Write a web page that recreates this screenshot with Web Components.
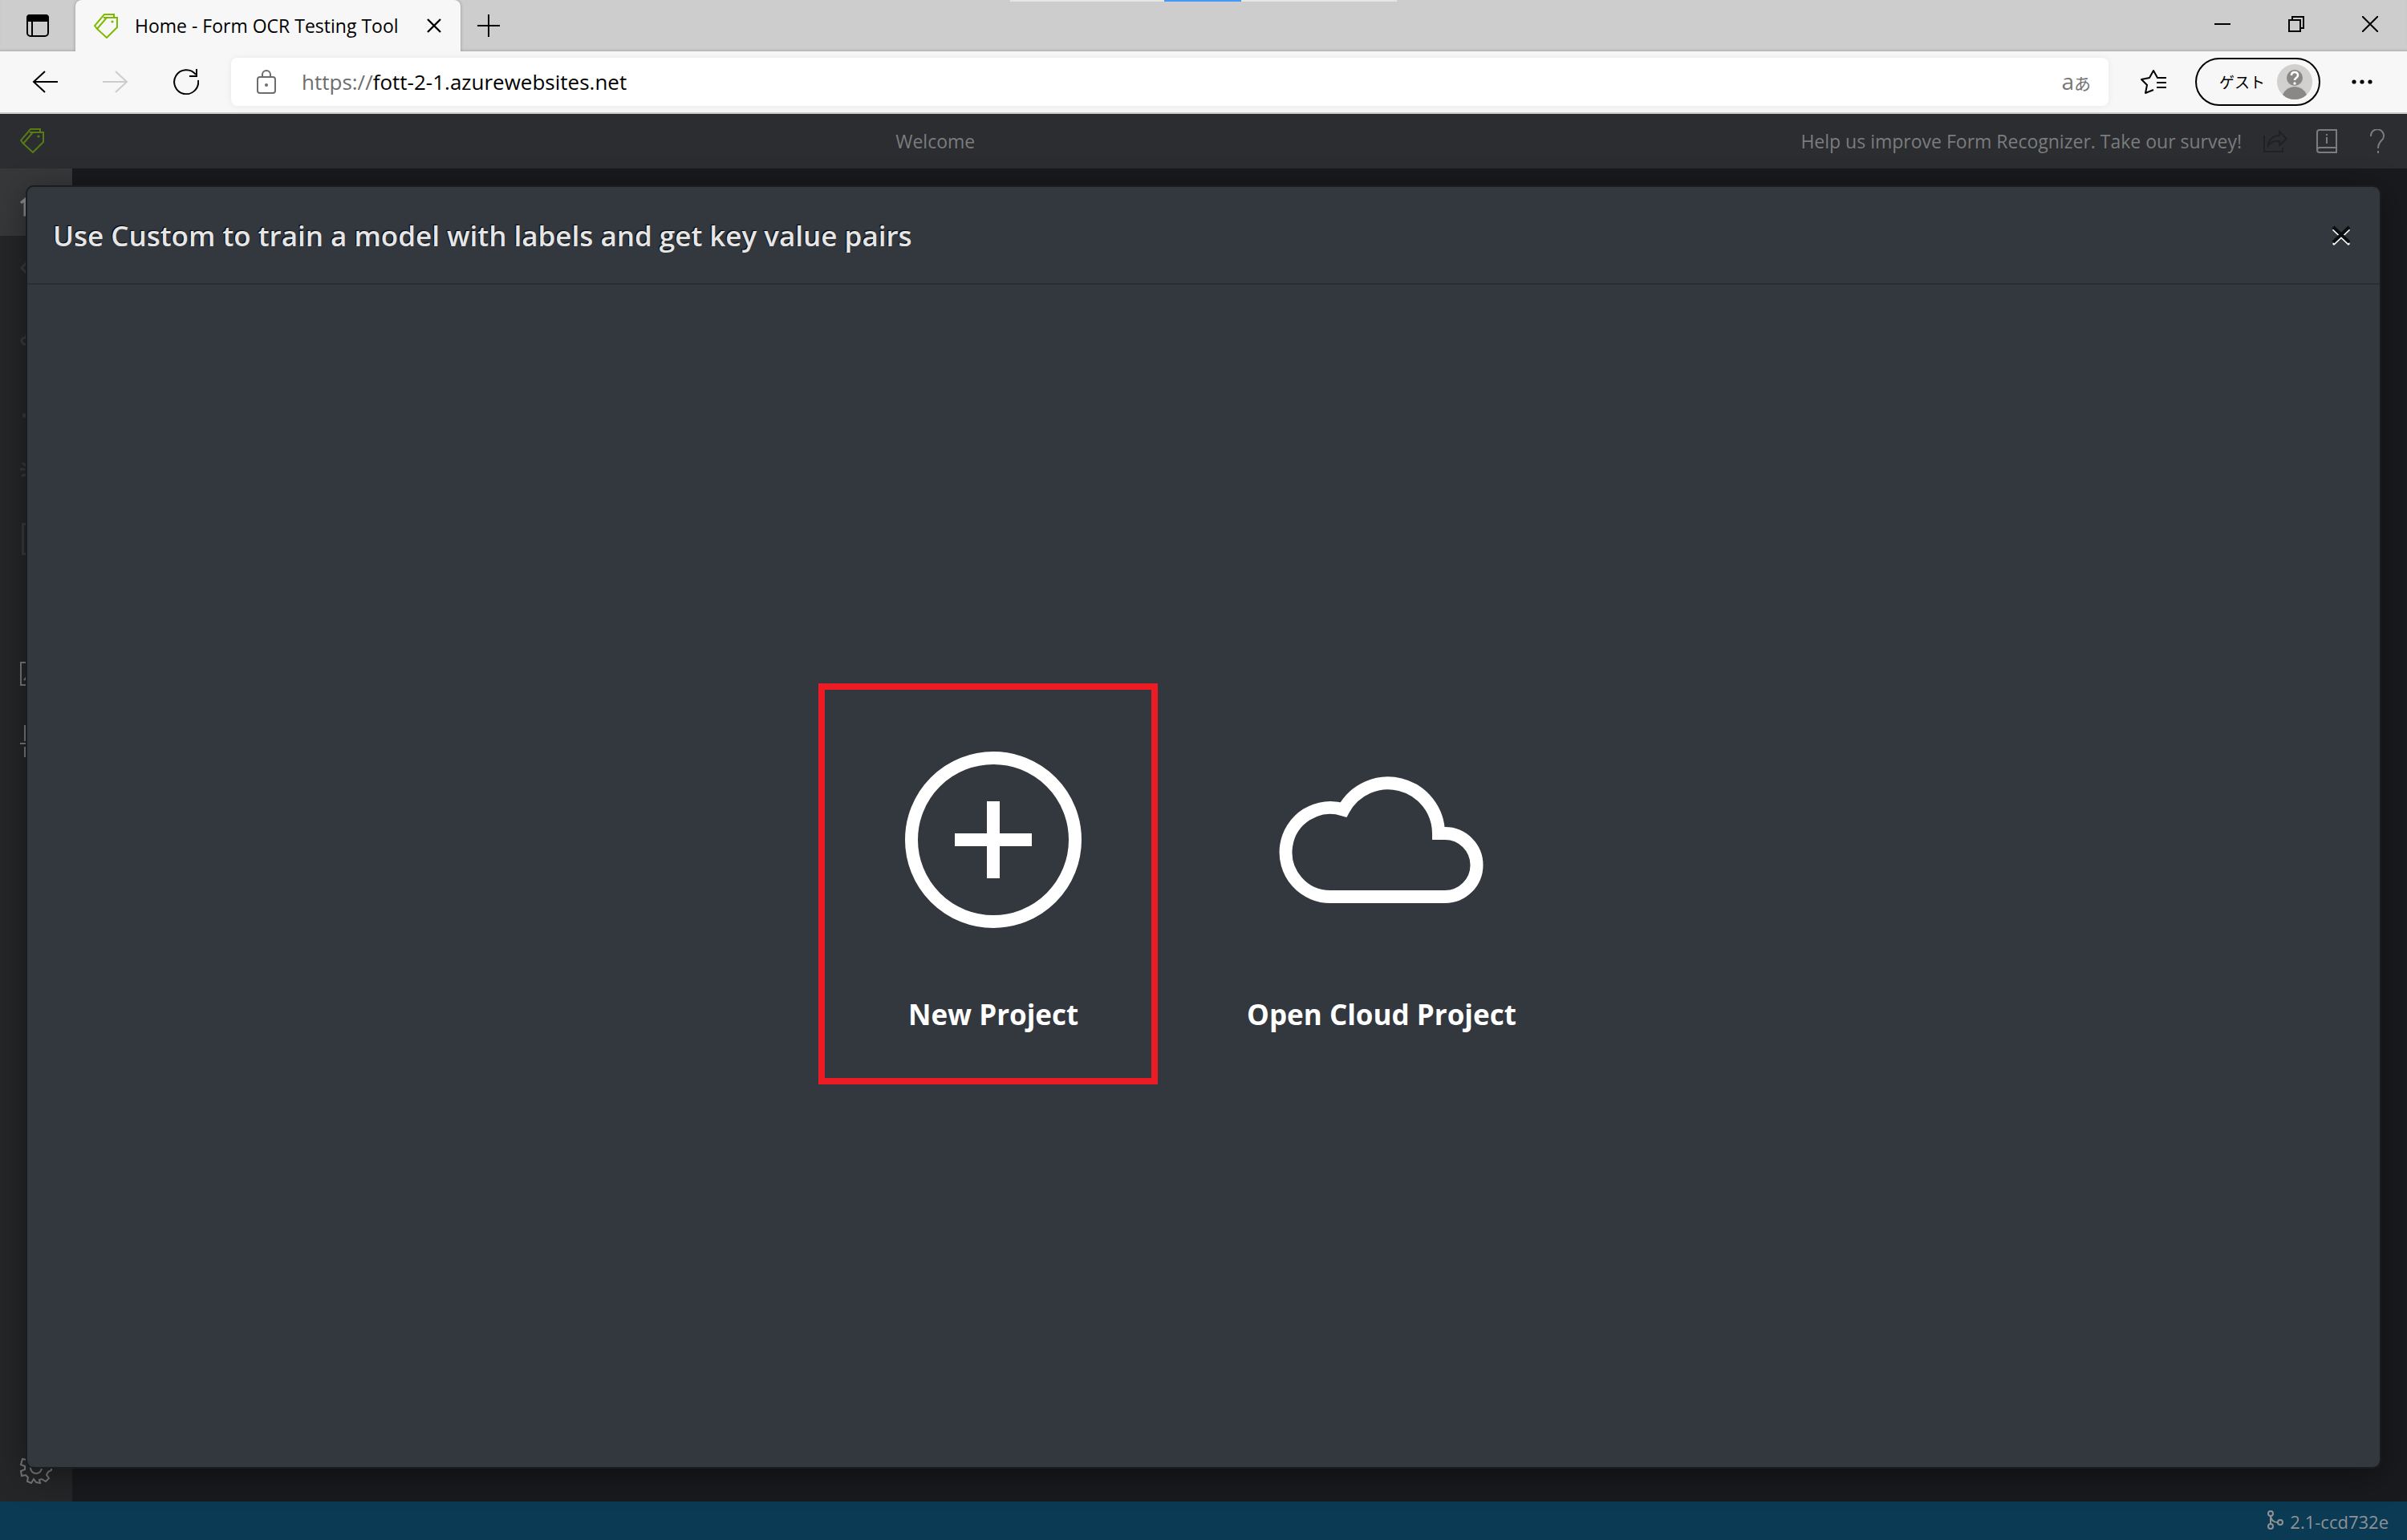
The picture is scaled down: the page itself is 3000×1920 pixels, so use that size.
<!DOCTYPE html>
<html lang="ja">
<head>
<meta charset="utf-8">
<title>Home - Form OCR Testing Tool</title>
<style>
  html, body { margin: 0; height: 100%; }
  body { font-family: "Open Sans", "Noto Sans", "Noto Sans CJK JP", sans-serif; }
</style>
</head>
<body>
<browser-window></browser-window>
<script>
const base = `<style>
  * { box-sizing: border-box; }
  button { font: inherit; color: inherit; background: none; border: 0; padding: 0; margin: 0; display: flex; align-items: center; justify-content: center; cursor: pointer; }
  a { color: inherit; text-decoration: none; }
  svg { display: block; fill: none; stroke: currentColor; stroke-width: 2; flex: none; }
  svg.solid { stroke: none; fill: currentColor; }
</style>`;

function define(name, html) {
  const template = document.createElement("template");
  template.innerHTML = base + html;
  customElements.define(name, class extends HTMLElement {
    constructor() {
      super();
      this.attachShadow({ mode: "open" }).append(template.content.cloneNode(true));
    }
  });
}

define("tag-logo", `
<style>:host { display: block; color: #7fba00; }</style>
<svg width="30" height="32" viewBox="0 0 30 32" aria-hidden="true">
  <path d="M12 6H29V18L16 31L4 20L16 6"/>
  <path d="M4 20L1 16L13 2H25V6"/>
  <circle cx="23" cy="11" r="1.6" fill="currentColor" stroke="none"/>
</svg>`);

define("tab-strip", `
<style>
  :host { display: block; background: #cdcdcd; box-shadow: inset 0 -3px 3px -2px #aaa; color: #000; }
  .bar { display: flex; height: 64px; align-items: stretch; }
  .tabs-menu { width: 94px; }
  .tab { display: flex; align-items: center; width: 480px; padding: 0 16px 0 23px; gap: 21px; background: #f7f7f7; border-radius: 8px 8px 0 0; box-shadow: 0 0 4px #0004; clip-path: inset(0 -4px 0 -4px); font-size: 23px; }
  .tab span { flex: 1; white-space: nowrap; line-height: 32px; }
  .tab button { width: 34px; height: 34px; }
  .new { width: 70px; }
  .window { margin-left: auto; display: flex; }
  .window button { width: 92px; height: 60px; }
  .snap { position: absolute; top: 0; left: 50%; width: 482px; height: 2px; margin-left: -241px; background: linear-gradient(90deg, #e6e6e6 192px, #429af8 192px 288px, #e6e6e6 288px); }
</style>
<div class="snap"></div>
<div class="bar">
  <button class="tabs-menu" aria-label="Tab actions"><svg width="28" height="28" viewBox="0 0 28 28"><rect x="1" y="1" width="26" height="26" rx="4"/><path d="M1 8V4Q1 1 4 1H24Q27 1 27 4V8Z" fill="currentColor"/><path d="M7 8V27"/></svg></button>
  <div class="tab"><tag-logo></tag-logo><span>Home - Form OCR Testing Tool</span>
    <button aria-label="Close tab"><svg width="18" height="18" viewBox="0 0 18 18"><path d="M1 1L17 17M17 1L1 17" stroke-width="2.4"/></svg></button></div>
  <button class="new" aria-label="New tab"><svg width="28" height="28" viewBox="0 0 28 28"><path d="M14 0V28M0 14H28"/></svg></button>
  <div class="window">
    <button aria-label="Minimize"><svg width="20" height="20" viewBox="0 0 20 20"><path d="M0 10H20"/></svg></button>
    <button aria-label="Restore"><svg width="20" height="20" viewBox="0 0 20 20"><path d="M1 5H15V19H1ZM5 5V1H19V15H15"/></svg></button>
    <button aria-label="Close"><svg width="20" height="20" viewBox="0 0 20 20"><path d="M0 0L20 20M20 0L0 20"/></svg></button>
  </div>
</div>`);

define("browser-toolbar", `
<style>
  :host { display: block; background: #f7f7f7; border-bottom: 2px solid #ccc; color: #000; }
  .bar { display: flex; height: 76px; align-items: center; gap: 16px; padding: 0 20px; }
  .bar > button { width: 72px; height: 60px; }
  .bar > .off { color: #ccc; }
  .address { flex: 1; display: flex; align-items: center; height: 60px; margin: 0 4px; padding: 0 22px 0 32px; background: #fff; border-radius: 8px; box-shadow: 0 0 10px #0001; font-size: 26px; line-height: 36px; color: #6d6d6d; }
  .address label { display: flex; align-items: center; gap: 32px; }
  input { flex: 1; min-width: 0; border: 0; padding: 0; background: none; font: inherit; color: #000; outline: 0; }
  .lang { align-items: baseline; color: #767676; font-size: 21px; }
  .lang b { font-weight: 400; font-size: 28px; }
  .bar > .guest { width: 156px; border: 2px solid #000; border-radius: 30px; padding: 0 8px 0 28px; justify-content: space-between; font: 19px/30px "Noto Sans CJK JP", sans-serif; }
</style>
<div class="bar">
  <button aria-label="Back"><svg width="32" height="28" viewBox="0 0 32 28"><path d="M32 14H2M16 1L2 14L16 27"/></svg></button>
  <button class="off" aria-label="Forward" disabled><svg width="32" height="28" viewBox="0 0 32 28"><path d="M0 14H30M16 1L30 14L16 27"/></svg></button>
  <button aria-label="Refresh"><svg width="32" height="32" viewBox="0 0 32 32"><path d="M28 7A15 15 0 1 0 31 14"/><path d="M29 0V9H20"/></svg></button>
  <div class="address">
    <label for="url"><svg width="24" height="30" viewBox="0 0 24 30"><rect x="1" y="9" width="22" height="20" rx="3"/><path d="M7 9V6A5 5 0 0 1 17 6V9"/><circle cx="12" cy="19" r="2" fill="currentColor" stroke="none"/></svg><span>https://</span></label>
    <input id="url" value="fott-2-1.azurewebsites.net">
    <button class="lang" aria-label="Translate"><b>a</b>あ</button>
  </div>
  <button aria-label="Favorites"><svg width="32" height="30" viewBox="0 0 32 30" stroke-linejoin="round"><path d="M32 10H21L16 1L11 10L1 12L8 19L6 29L16 25"/><path d="M20 16H32M20 22H32"/></svg></button>
  <button class="guest">ゲスト<svg class="solid" width="44" height="44" viewBox="0 0 44 44"><circle cx="22" cy="22" r="22" fill="#d2d0ce"/><circle cx="22" cy="17" r="10" fill="#8a8886"/><path d="M7 38Q12 28 22 28Q32 28 37 38Q31 44 22 44Q13 44 7 38Z" fill="#8a8886"/><path d="M18 14Q18 10 22 10Q26 10 26 14C26 17 22 17 22 20" fill="none" stroke="#fff" stroke-width="2.6"/><circle cx="22" cy="24" r="1.7" fill="#fff"/></svg></button>
  <button aria-label="More"><svg class="solid" width="26" height="6" viewBox="0 0 26 6"><circle cx="3" cy="3" r="2.6"/><circle cx="13" cy="3" r="2.6"/><circle cx="23" cy="3" r="2.6"/></svg></button>
</div>`);

define("app-header", `
<style>
  :host { display: flex; align-items: center; height: 68px; padding: 0 4px 0 25px; background: #2b2d30; color: #7b7c7e; font-size: 23px; line-height: 32px; }
  tag-logo { opacity: .55; margin-bottom: 2px; }
  .title { flex: 1; text-align: center; padding-left: 32px; }
  a { margin-right: 10px; }
  button { width: 64px; height: 66px; }
  .share { color: #1f2124; }
</style>
<tag-logo></tag-logo>
<span class="title">Welcome</span>
<a href="#survey">Help us improve Form Recognizer. Take our survey!</a>
<button class="share" aria-label="Share" disabled><svg width="30" height="28" viewBox="0 0 30 28"><path d="M1 7V27H24V22"/><path d="M6 20C6 12 12 7 20 7V2L29 11L20 19V14C14 13 9 15 6 20Z"/></svg></button>
<button aria-label="Documentation"><svg width="26" height="30" viewBox="0 0 26 30"><path d="M25 23H4Q1 23 1 26Q1 29 4 29H25V1H4Q1 1 1 4V26M13 10V18M13 6V8"/></svg></button>
<button aria-label="Help"><svg width="20" height="30" viewBox="0 0 20 30"><path d="M1 9A8 8 0 1 1 16 12C13 16 10 17 10 24M10 27V30"/></svg></button>`);

define("side-nav", `
<style>
  :host { display: flex; flex-direction: column; width: 90px; background: #252628; color: #38393b; }
  button { height: 84px; width: 90px; }
  .on { background: #37383a; color: #8a8b8d; }
  .lit { color: #77787a; }
  .gap { height: 84px; }
  .last { margin-top: auto; color: #77787a; }
</style>
<button class="on" aria-label="Home"><svg width="40" height="36" viewBox="0 0 40 36"><path d="M1 19L20 3L39 19M6 15V34H16V23H24V34H34V15" stroke-width="3"/></svg></button>
<button aria-label="Tags"><svg width="40" height="32" viewBox="0 0 40 32"><path d="M12 3L2 14L12 25M28 3L38 14L28 25" stroke-width="3"/></svg></button>
<button aria-label="Connections"><svg width="40" height="38" viewBox="0 0 40 38"><g stroke-width="3"><circle cx="6" cy="24" r="4"/><circle cx="34" cy="24" r="4"/><circle cx="12" cy="4" r="3"/><path d="M11 6L7 20M10 24H30M15 6L32 21"/></g></svg></button>
<button aria-label="Train"><svg width="34" height="34" viewBox="0 0 34 34"><path d="M0 31H34" stroke-width="5"/></svg></button>
<button aria-label="Analyze"><svg width="40" height="40" viewBox="0 0 40 40"><path d="M1 17H5M4 10L7 12M3 25L6 24" stroke-width="3" stroke-linecap="round"/><circle cx="22" cy="17" r="9"/></svg></button>
<button aria-label="Compose"><svg width="36" height="40" viewBox="0 0 36 40"><rect x="1.5" y="1.5" width="33" height="37" stroke-width="3"/></svg></button>
<div class="gap"></div>
<button class="lit" aria-label="Layout"><svg width="40" height="30" viewBox="0 0 40 30"><path d="M1 1H39V29H1ZM5 23L14 12L22 21L27 17L35 25"/></svg></button>
<button class="lit" aria-label="Prebuilt"><svg width="40" height="40" viewBox="0 0 40 40"><path d="M6 0V20M0 23H12M6 27V40M28 0V8M22 12H34M28 16V40"/></svg></button>
<button class="last" aria-label="Settings"><svg width="40" height="40" viewBox="-20 -20 40 40"><path d="M-3 -19H3L4 -14L9 -12L13 -15L17 -11L14 -7L15 -3L19 -2V3L15 5L13 9L16 13L12 17L7 14L4 15L5 19L0 18L-3 14L-6 19L-11 17L-10 12L-13 9L-18 10L-19 4L-14 2L-14 -2L-19 -4L-17 -11L-12 -10L-9 -12L-9 -17L-4 -14Z"/><circle r="7"/></svg></button>`);

define("app-footer", `
<style>
  :host { display: flex; height: 48px; align-items: center; justify-content: flex-end; gap: 8px; padding: 0 23px; background: #0b3b54; color: #8f9294; font-size: 22px; line-height: 32px; }
  svg { margin-bottom: 2px; }
  span { padding-top: 2px; }
</style>
<svg width="20" height="24" viewBox="0 0 20 24"><circle cx="4" cy="4" r="3"/><circle cx="4" cy="20" r="3"/><circle cx="16" cy="15" r="3"/><path d="M4 7V17M4 7Q5 15 13 15"/></svg>
<span>2.1-ccd732e</span>`);

define("project-option", `
<style>
  :host { display: block; position: relative; color: #fff; }
  button { flex-direction: column; font-size: 35px; font-weight: 700; line-height: 52px; white-space: nowrap; }
  .icon { height: 384px; display: flex; align-items: center; justify-content: center; min-width: 256px; }
  :host([marked])::after { content: ""; position: absolute; inset: -3px -77px -61px -90px; border: 8px solid #ed1c24; pointer-events: none; }
</style>
<button><span class="icon"><slot name="icon"></slot></span><slot></slot></button>`);

define("project-dialog", `
<style>
  :host { display: flex; flex-direction: column; background: #33373e; background-clip: padding-box; border: 2px solid #1b1c1f; border-radius: 10px; box-shadow: 0 8px 40px #0006; color: #e6e6e6; }
  header { display: flex; align-items: center; justify-content: space-between; height: 122px; padding: 2px 31px 0 32px; border-bottom: 2px solid #2a2d32; }
  h2 { margin: 0; font-size: 35px; line-height: 52px; font-weight: 600; text-shadow: -1px -1px 1px #000; }
  header button { width: 34px; height: 34px; }
  main { flex: 1; display: flex; align-items: center; justify-content: center; gap: 188px; padding-bottom: 38px; }
</style>
<header><h2>Use Custom to train a model with labels and get key value pairs</h2>
  <button aria-label="Close"><svg width="24" height="26" viewBox="0 0 24 26"><path d="M2 5L22 24M22 5L2 24" stroke="#fff" stroke-width="3"/><path d="M2 2L22 21M22 2L2 21" stroke="#0c0d0e" stroke-width="4"/></svg></button></header>
<main>
  <project-option marked>New Project<svg slot="icon" width="256" height="256" viewBox="0 0 256 256" aria-hidden="true"><circle cx="128" cy="128" r="102" stroke-width="16"/><path d="M128 80V176M80 128H176" stroke-width="16"/></svg></project-option>
  <project-option>Open Cloud Project<svg slot="icon" width="256" height="256" viewBox="0 0 256 256" aria-hidden="true"><path d="M65 199H207A39.5 39.5 0 0 0 207 120H199A63 63 0 0 0 80.5 90.5A55.5 55.5 0 1 0 65 199Z" stroke-width="16"/></svg></project-option>
</main>`);

define("label-tool", `
<style>
  :host { flex: 1; display: flex; flex-direction: column; position: relative; overflow: hidden; background: #181a1d; }
  .body { flex: 1; display: flex; }
  project-dialog { position: absolute; inset: 89px 32px; }
</style>
<app-header></app-header>
<div class="body"><side-nav></side-nav></div>
<app-footer></app-footer>
<project-dialog role="dialog" aria-label="Custom project"></project-dialog>`);

define("browser-window", `
<style>:host { display: flex; flex-direction: column; min-height: 100vh; }</style>
<tab-strip></tab-strip>
<browser-toolbar></browser-toolbar>
<label-tool></label-tool>`);
</script>
</body>
</html>
